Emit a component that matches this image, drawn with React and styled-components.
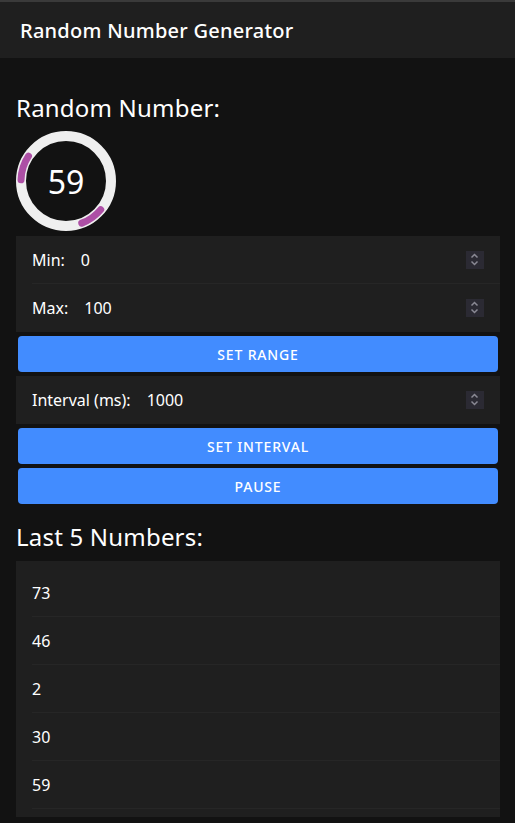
import React from "react";
import styled, { createGlobalStyle } from "styled-components";

const Global = createGlobalStyle`
  html, body {
    margin: 0;
    padding: 0;
    background: #121212;
    overflow: hidden;
    color-scheme: dark;
  }
  body {
    font-family: "Noto Sans", "Open Sans", sans-serif;
    color: #ffffff;
  }
  * { box-sizing: border-box; }
`;

const Page = styled.div`
  display: flex;
  flex-direction: column;
  width: 515px;
  height: 823px;
  background: #121212;
`;

const Header = styled.header`
  display: flex;
  align-items: center;
  height: 58px;
  padding: 0 20px 0 20px;
  background: #1f1f1f;
  border-top: 2px solid #3a3a3a;
`;

const Title = styled.h1`
  margin: 0;
  font-size: 20px;
  font-weight: 500;
  letter-spacing: 0.0125em;
  color: #ffffff;
`;

const Content = styled.main`
  display: flex;
  flex-direction: column;
  padding: 16px 15px 0 16px;
`;

const Heading = styled.h2`
  margin: ${(p) => p.$top}px 0 ${(p) => p.$bottom}px;
  font-size: 24px;
  font-weight: 400;
  letter-spacing: 0.2px;
  line-height: 32px;
  color: #ffffff;
`;

const Ring = styled.div`
  position: relative;
  width: 100px;
  height: 100px;
  margin-bottom: 5px;
`;

const RingValue = styled.span`
  position: absolute;
  inset: 0;
  display: flex;
  align-items: center;
  justify-content: center;
  font-size: 32px;
  font-weight: 400;
  color: #ffffff;
`;

const List = styled.div`
  display: flex;
  flex-direction: column;
  margin-top: ${(p) => (p.$gap ? "4px" : "0")};
  background: #1f1f1f;
  padding: ${(p) => (p.$padded ? "8px 0" : "0")};
`;

const Item = styled.div`
  display: flex;
  align-items: center;
  height: 48px;
  padding-left: 16px;
`;

const ItemInner = styled.div`
  flex: 1;
  display: flex;
  align-items: center;
  gap: 16px;
  height: 100%;
  padding-right: 16px;
  border-bottom: 1px solid ${(p) => (p.$line ? "#262626" : "transparent")};
`;

const Label = styled.span`
  font-size: 16px;
  color: #ffffff;
  white-space: nowrap;
`;

const Field = styled.input`
  flex: 1;
  min-width: 0;
  background: transparent;
  border: none;
  outline: none;
  padding: 0;
  font-family: inherit;
  font-size: 16px;
  color: #ffffff;
`;

const Spinner = styled.span`
  display: flex;
  width: 18px;
  height: 18px;
  background: #2b2a33;
`;

const Text = styled.span`
  font-size: 16px;
  color: #ffffff;
`;

const Button = styled.button`
  display: flex;
  align-items: center;
  justify-content: center;
  height: 36px;
  margin: 4px 2px 0;
  border: none;
  border-radius: 4px;
  background: #428cff;
  color: #ffffff;
  font-family: inherit;
  font-size: 14px;
  font-weight: 500;
  letter-spacing: 0.06em;
  text-transform: uppercase;
`;

const Stepper = () => (
  <Spinner>
    <svg width="18" height="18" viewBox="0 0 18 18" fill="none">
      <path d="M5.5 6.5 L8.5 3.5 L11.5 6.5" stroke="#8a8994" strokeWidth="1.5" />
      <path d="M5.5 10.5 L8.5 13.5 L11.5 10.5" stroke="#8a8994" strokeWidth="1.5" />
    </svg>
  </Spinner>
);

const InputRow = ({ label, value, line }) => (
  <Item>
    <ItemInner $line={line}>
      <Label>{label}</Label>
      <Field type="text" defaultValue={value} readOnly />
      <Stepper />
    </ItemInner>
  </Item>
);

const history = [73, 46, 2, 30, 59];

export default function App() {
  return (
    <>
      <Global />
      <Page>
        <Header>
          <Title>Random Number Generator</Title>
        </Header>
        <Content>
          <Heading $top={18} $bottom={7}>Random Number:</Heading>
          <Ring>
            <svg width="100" height="100" viewBox="0 0 100 100" fill="none">
              <circle cx="50" cy="50" r="45" stroke="#efefef" strokeWidth="10" />
              <path
                d="M12.47 25.16 A45 45 0 0 0 5.02 48.82"
                stroke="#ad4fa5"
                strokeWidth="7"
                strokeLinecap="round"
              />
              <path
                d="M65.76 92.15 A45 45 0 0 0 84.72 78.62"
                stroke="#ad4fa5"
                strokeWidth="7"
                strokeLinecap="round"
              />
            </svg>
            <RingValue>59</RingValue>
          </Ring>
          <List>
            <InputRow label="Min:" value="0" line />
            <InputRow label="Max:" value="100" />
          </List>
          <Button>Set Range</Button>
          <List $gap>
            <InputRow label="Interval (ms):" value="1000" />
          </List>
          <Button>Set Interval</Button>
          <Button>Pause</Button>
          <Heading $top={17} $bottom={8}>Last 5 Numbers:</Heading>
          <List $padded>
            {history.map((n, i) => (
              <Item key={i}>
                <ItemInner $line>
                  <Text>{n}</Text>
                </ItemInner>
              </Item>
            ))}
          </List>
        </Content>
      </Page>
    </>
  );
}
